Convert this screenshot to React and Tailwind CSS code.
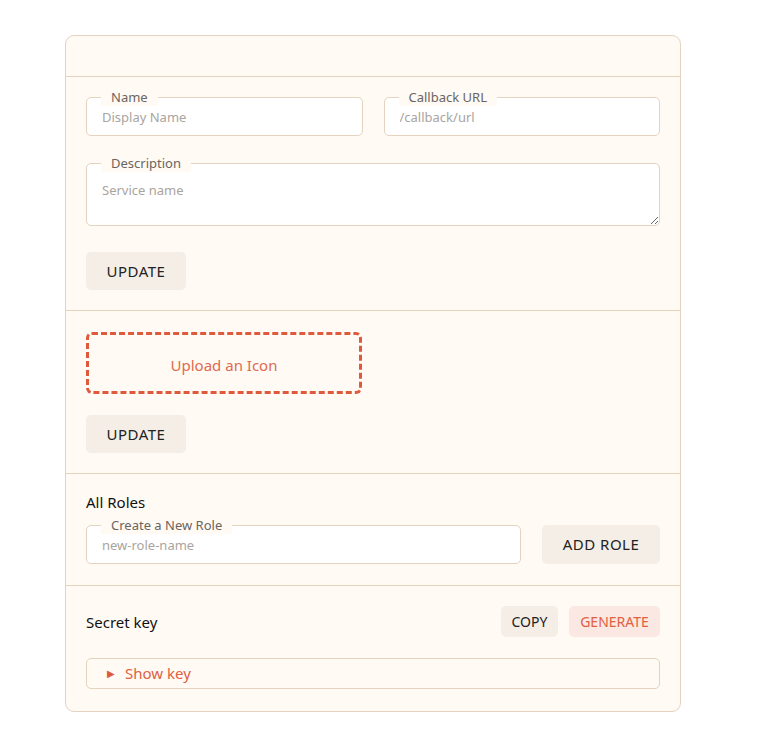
import React from 'react';

const FONT = { fontFamily: '"Noto Sans", "Open Sans", sans-serif' };

const Field = ({ label, placeholder, className = '' }) => (
  <div className={`relative ${className}`}>
    <span className="absolute -top-[8px] left-[15px] px-[10px] bg-[#fffaf4] text-[13px] leading-[17px] text-[#6b6560]">
      {label}
    </span>
    <input
      placeholder={placeholder}
      className="w-full h-[39px] pl-[15px] pt-[1px] bg-white border border-[#e3d3bf] rounded-[5px] text-[13px] text-[#333] placeholder:text-[#aaa49e] focus:outline-none"
    />
  </div>
);

const UpdateButton = () => (
  <button className="w-[100px] h-[38px] bg-[#f5eee7] rounded-[5px] text-[15px] tracking-[0.5px] text-[#222]">
    UPDATE
  </button>
);

export default function App() {
  return (
    <div className="min-h-screen bg-white pt-[35px] pb-[39px]" style={FONT}>
      <div className="ml-[65px] w-[616px] bg-[#fffaf4] border border-[#e3d3bf] rounded-[9px]">
        {/* header */}
        <div className="h-[41px] border-b border-[#e3d3bf]" />

        {/* details */}
        <div className="px-[20px] pt-[20px] pb-[20px] border-b border-[#e3d3bf]">
          <div className="grid grid-cols-2 gap-[21px]">
            <Field label="Name" placeholder="Display Name" />
            <Field label="Callback URL" placeholder="/callback/url" />
          </div>
          <div className="relative mt-[27px]">
            <span className="absolute -top-[8px] left-[15px] px-[10px] bg-[#fffaf4] text-[13px] leading-[17px] text-[#6b6560] z-10">
              Description
            </span>
            <textarea
              placeholder="Service name"
              className="block w-full h-[63px] pl-[15px] pt-[17px] bg-white border border-[#e3d3bf] rounded-[5px] text-[13px] leading-[18px] text-[#333] placeholder:text-[#aaa49e] focus:outline-none"
            />
          </div>
          <div className="mt-[26px]">
            <UpdateButton />
          </div>
        </div>

        {/* icon */}
        <div className="px-[20px] pt-[21px] pb-[20px] border-b border-[#e3d3bf]">
          <div className="w-[276px] h-[62px] pt-[4px] border-[3px] border-dashed border-[#df5a3c] rounded-[6px] flex items-center justify-center text-[15px] text-[#e06a4f]">
            Upload an Icon
          </div>
          <div className="mt-[21px]">
            <UpdateButton />
          </div>
        </div>

        {/* roles */}
        <div className="px-[20px] pt-[18px] pb-[21px] border-b border-[#e3d3bf]">
          <p className="text-[15px] leading-[20px] text-[#111]">All Roles</p>
          <div className="flex items-center gap-[21px] mt-[13px]">
            <Field label="Create a New Role" placeholder="new-role-name" className="flex-1" />
            <button className="w-[118px] h-[39px] bg-[#f5eee7] rounded-[5px] text-[15px] tracking-[0.5px] text-[#222]">
              ADD ROLE
            </button>
          </div>
        </div>

        {/* secret */}
        <div className="px-[20px] pt-[20px] pb-[22px]">
          <div className="flex items-center justify-between">
            <span className="text-[15px] text-[#111] pt-[1px]">Secret key</span>
            <div className="flex gap-[11px]">
              <button className="w-[57px] h-[31px] bg-[#f5eee7] rounded-[5px] text-[14px] text-[#222]">COPY</button>
              <button className="w-[91px] h-[31px] bg-[#fbe8e2] rounded-[5px] text-[14px] text-[#e0603f]">GENERATE</button>
            </div>
          </div>
          <div className="mt-[21px] h-[31px] border border-[#e3d3bf] rounded-[5px] flex items-center pl-[20px] gap-[10px] text-[15px] text-[#e0603f]">
            <span className="text-[10px] text-[#df5a3c]">▶</span>
            <span>Show key</span>
          </div>
        </div>
      </div>
    </div>
  );
}
